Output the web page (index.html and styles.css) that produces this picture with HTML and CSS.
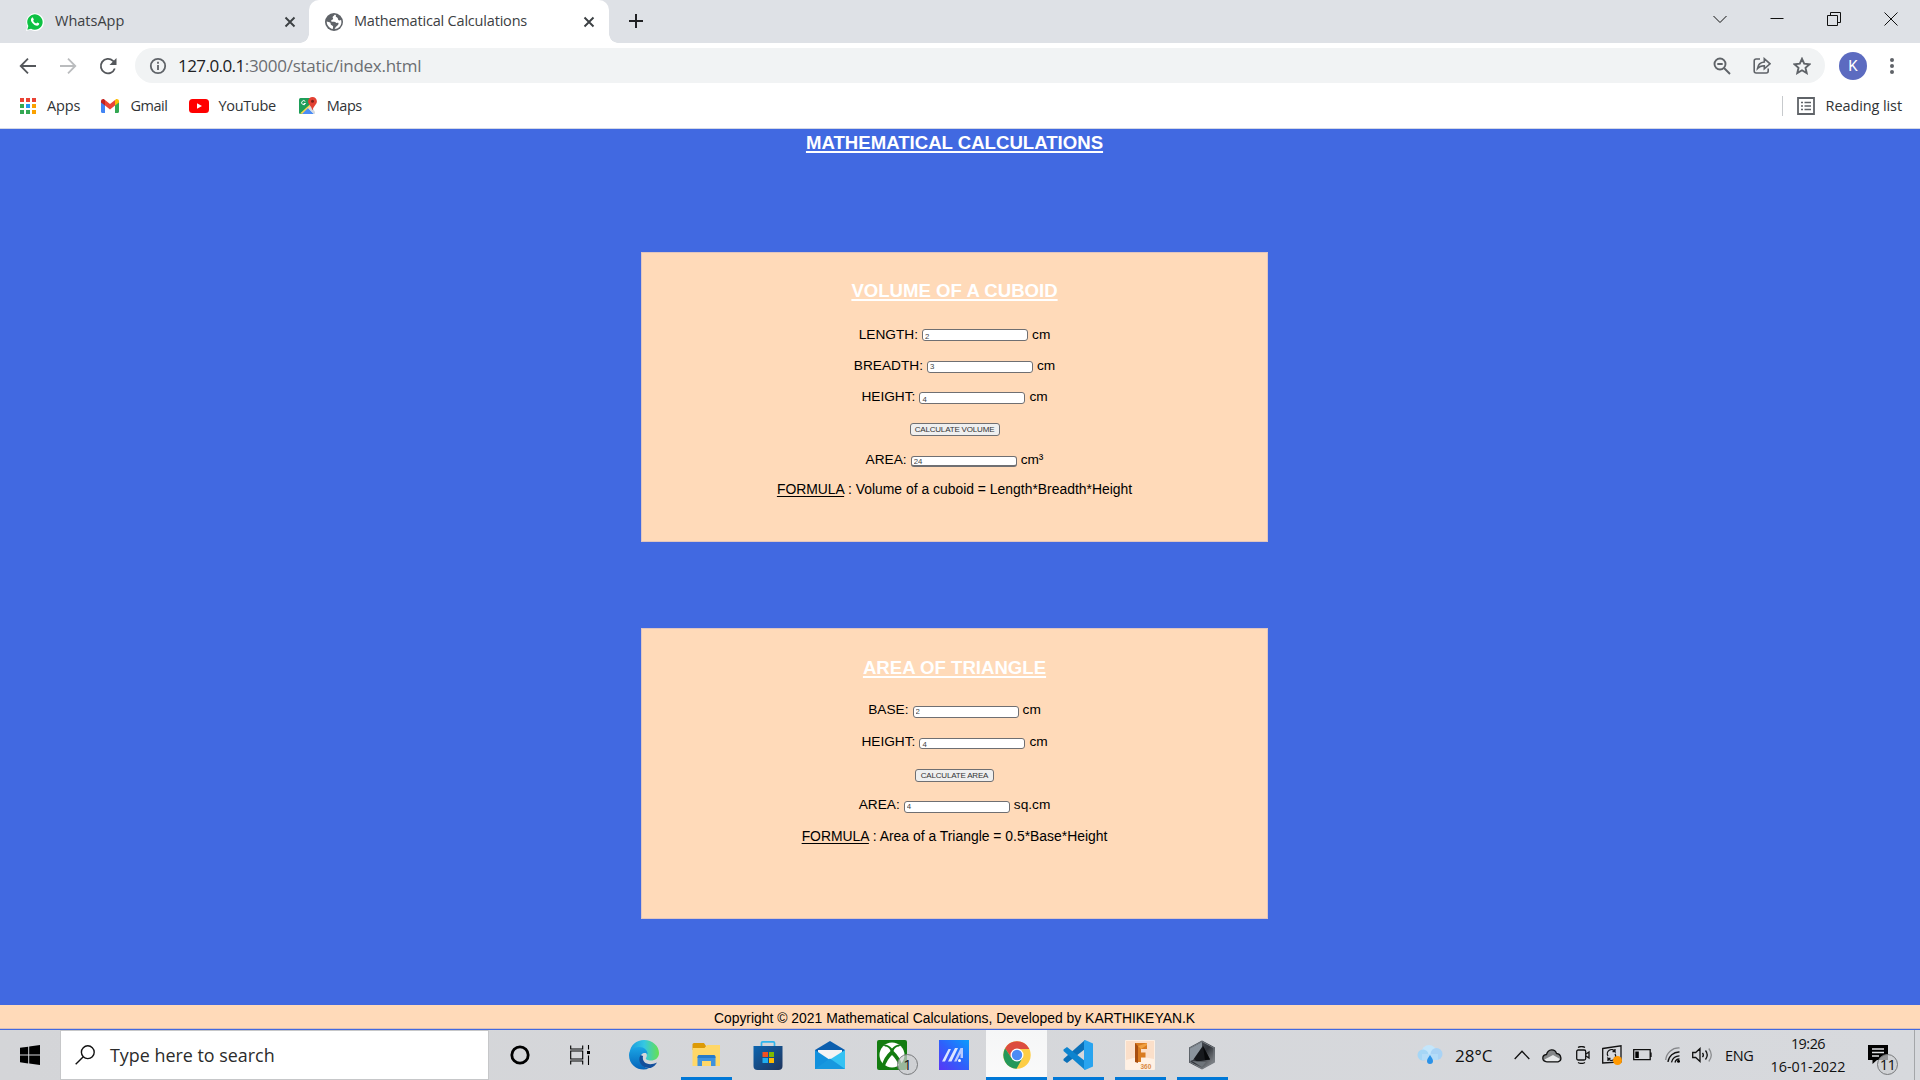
FILE: index.html
```html
<!DOCTYPE html>
<html lang="en">
<head>
<meta charset="utf-8">
<title>Mathematical Calculations</title>
<link rel="stylesheet" href="styles.css">
</head>
<body>
<div class="screen">

  <header class="tabstrip">
    <div class="tab">
      <svg class="favicon" viewBox="0 0 18 18"><path d="M0 18l1.3-4.6A8.9 8.9 0 1 1 4.6 16.8z" fill="#fff"/><path d="M1.3 16.7l1-3.700A7.7 7.7 0 1 1 5 15.700z" fill="#0dc143"/><path d="M5.9 4.800c.4-.4 1-.3 1.200.1l.7 1.500c.1.400-.6 1-.6 1.300.6 1.300 1.600 2.200 2.900 2.700.4.100.9-1 1.300-.9l1.600.8c.4.200.2 1.300-.3 1.800-1 .9-2.500.7-4.200-.2a8.500 8.500 0 0 1-3.300-3.700c-.5-1.400-.2-2.600.7-3.400z" fill="#fff"/></svg>
      <span class="tab-title">WhatsApp</span>
      <svg class="tab-close" viewBox="0 0 12 12"><path d="M1.500 1.500l9 9M10.500 1.500l-9 9"/></svg>
    </div>
    <div class="tab tab-active">
      <svg class="favicon" viewBox="0 0 18 18"><circle cx="9" cy="9" r="9" fill="#5f6368"/><path d="M9.500 1.700c-.3 1-1.700 1.300-1.900 2.300-.1 1 .7 1.100.5 2-.3 1-2 .7-2 1.900 0 1 1.600.7 3 .8 1.300.2 1.700 1 2.600 1.200.8.100 1.200-.4 1.700.1.600.8-.7 2.500-1.800 3.300-.9.700-1.500 1.500-2 2.800 3.700-.3 6.800-3.200 6.800-7.100 0-.7-.2-1.700-.4-2.200-.8.800-2 .9-2.600.2-.6-.8-.2-1.500-1-2.300-.7-.5-1.700-.8-1.700-1.700 0-.5.200-.8.500-1zM1.700 8.500c0 3.700 2.600 6.800 6.100 7.500.1-1.300.5-2 .2-2.700-.5-.9-1.800-.8-2.200-1.700-.3-.8.100-1.400-.7-2.100-.8-.6-2.200-.3-3.400-1z" fill="#fff"/></svg>
      <span class="tab-title tight">Mathematical Calculations</span>
      <svg class="tab-close" viewBox="0 0 12 12"><path d="M1.500 1.500l9 9M10.500 1.500l-9 9"/></svg>
    </div>
    <svg class="new-tab" viewBox="0 0 16 16"><path d="M8 1v14M1 8h14"/></svg>
    <div class="window-controls">
      <svg viewBox="0 0 14 14"><path d="M.5 4l6.500 6.500L13.500 4"/></svg>
      <svg viewBox="0 0 14 14"><path d="M.5 6.500h13"/></svg>
      <svg viewBox="0 0 14 14"><path d="M.5 3.500h10v10h-10zM3.500 3.500v-3h10v10h-3"/></svg>
      <svg viewBox="0 0 14 14"><path d="M.5.500l13 13M13.500.500l-13 13"/></svg>
    </div>
  </header>

  <nav class="toolbar">
    <svg class="nav-icon" viewBox="0 0 18 18"><path d="M17 9H2M9 1.700L1.700 9 9 16.300"/></svg>
    <svg class="nav-icon disabled" viewBox="0 0 18 18"><path d="M1 9h15M9 1.700L16.300 9 9 16.300"/></svg>
    <svg class="nav-icon" viewBox="0 0 18 18"><path d="M15.800 11.500A7.200 7.200 0 1 1 14 3.900l2 2"/><path d="M17.500 1v7h-7z" class="solid"/></svg>
    <div class="omnibox">
      <svg class="info" viewBox="0 0 18 18"><circle cx="9" cy="9" r="7.200"/><path d="M9 8v5M9 4.700v2"/></svg>
      <span class="host">127.0.0.1</span><span class="path">:3000/static/index.html</span>
      <div class="omni-actions">
        <svg viewBox="0 0 18 18"><circle cx="7" cy="7" r="5.500"/><path d="M4.300 7h5.400M11 11l6 6"/></svg>
        <svg viewBox="0 0 18 18"><path d="M7 2H3.200C2 2 1.200 2.800 1.200 4v10c0 1.300.8 2 2 2h10c1.300 0 2-.7 2-2v-2.500M4.500 11.500C5 7.500 7.500 5.300 11.300 5V1.700L17 6.800l-5.700 5V8.700c-3-.1-5.100.8-6.800 2.800z" class="thin"/></svg>
        <svg viewBox="0 0 18 18"><path d="M9 1.800l2.200 4.900 5.400.5-4.100 3.600 1.200 5.300L9 13.300l-4.700 2.800 1.200-5.300-4.100-3.600 5.400-.5z"/></svg>
      </div>
    </div>
    <div class="avatar">K</div>
    <svg class="kebab" viewBox="0 0 4 16"><circle cx="2" cy="2" r="2"/><circle cx="2" cy="8" r="2"/><circle cx="2" cy="14" r="2"/></svg>
  </nav>

  <nav class="bookmarks">
    <a class="bookmark bm-apps">
      <svg viewBox="0 0 18 18"><path d="M1 1h4v4H1zM7 1h4v4H7zM13 1h4v4h-4z" fill="#ea4335"/><path d="M1 7h4v4H1zM1 13h4v4H1zM7 13h4v4H7z" fill="#34a853"/><path d="M7 7h4v4H7z" fill="#2196f3"/><path d="M13 7h4v4h-4zM13 13h4v4h-4z" fill="#fba100"/></svg>
      <span>Apps</span></a>
    <a class="bookmark bm-gmail">
      <svg viewBox="0 0 18 18"><path d="M0 4l4 3v9H1.200C.5 16 0 15.500 0 14.800z" fill="#4285f4"/><path d="M14 7l4-3v10.800c0 .7-.5 1.200-1.200 1.200H14z" fill="#34a853"/><path d="M4 3l5 4 5-4v5.500l-5 4-5-4z" fill="#ea4335"/><path d="M0 4.300C0 2.500 2 1.500 3.400 2.500L4 3v5.500L0 5.600z" fill="#c5221f"/><path d="M18 4.300c0-1.800-2-2.800-3.400-1.800L14 3v5.500l4-2.900z" fill="#fbbc04"/></svg>
      <span>Gmail</span></a>
    <a class="bookmark bm-youtube">
      <svg viewBox="0 0 20 18"><rect y="2" width="20" height="14" rx="3.500" fill="#f00"/><path d="M8 6.200v5.600L13 9z" fill="#fff"/></svg>
      <span>YouTube</span></a>
    <a class="bookmark bm-maps">
      <svg viewBox="0 0 18 18"><path d="M0 2.500Q0 1 1.500 1H12v7L3 17H1.500Q0 17 0 15.500z" fill="#1e9e59"/><path d="M1 16.500L12.500 6l2 3L5 17z" fill="#ffd84a"/><path d="M3 17l6-6 6 6z" fill="#4c8df6"/><path d="M9 11l3-2.500 4 6.500v1.500L15 17z" fill="#d5d9de"/><path d="M6.300 4.500a2 2 0 1 0 .2 2H4.700" fill="none" stroke="#fff"/><path d="M13.500 0a4.400 4.400 0 0 1 4.400 4.400c0 3-3.300 4-4.200 8.600h-.4C12.400 8.400 9.100 7.400 9.100 4.400A4.400 4.400 0 0 1 13.500 0z" fill="#e34133"/><circle cx="13.500" cy="4.300" r="1.500" fill="#7b1f18"/></svg>
      <span>Maps</span></a>
    <div class="reading-list">
      <svg viewBox="0 0 18 18"><path d="M1 1h16v16H1z"/><path d="M4 5.500h2M7.500 5.500h6.500M4 9h2M7.500 9h6.500M4 12.500h2M7.500 12.500h6.500" class="thin"/></svg>
      <span>Reading list</span>
    </div>
  </nav>

  <main class="page">
    <h1 class="page-title">MATHEMATICAL CALCULATIONS</h1>

    <section class="card card-volume">
      <h2>VOLUME OF A CUBOID</h2>
      <div class="row"><label for="length">LENGTH:</label><input id="length" class="drop-1" value="2"><span>cm</span></div>
      <div class="row"><label for="breadth">BREADTH:</label><input id="breadth" class="drop-2 raised" value="3"><span>cm</span></div>
      <div class="row"><label for="height">HEIGHT:</label><input id="height" class="drop-2" value="4"><span>cm</span></div>
      <div class="row button-row"><button class="wide" type="button">CALCULATE VOLUME</button></div>
      <div class="row"><label for="volume">AREA:</label><input id="volume" class="drop-3 heavy" value="24"><span>cm³</span></div>
      <p class="formula"><u>FORMULA</u> : Volume of a cuboid = Length*Breadth*Height</p>
    </section>

    <section class="card card-area">
      <h2>AREA OF TRIANGLE</h2>
      <div class="row"><label for="base">BASE:</label><input id="base" class="drop-3 raised" value="2"><span>cm</span></div>
      <div class="row"><label for="tri-height">HEIGHT:</label><input id="tri-height" class="drop-3 short" value="4"><span>cm</span></div>
      <div class="row button-row"><button type="button">CALCULATE AREA</button></div>
      <div class="row"><label for="area">AREA:</label><input id="area" class="drop-3 raised" value="4"><span>sq.cm</span></div>
      <p class="formula"><u>FORMULA</u> : Area of a Triangle = 0.5*Base*Height</p>
    </section>

    <footer class="copyright">Copyright © 2021 Mathematical Calculations, Developed by KARTHIKEYAN.K</footer>
  </main>

  <div class="taskbar">
    <div class="start"><svg viewBox="0 0 20 20"><path d="M0 2.800L8.200 1.700v7.800H0zM9.200 1.500L20 0v9.500H9.200zM0 10.500h8.200v7.900L0 17.200zM9.200 10.500H20V20L9.200 18.500z"/></svg></div>
    <div class="search">
      <svg viewBox="0 0 20 20"><circle cx="12.800" cy="7.200" r="6.400"/><path d="M8.300 11.700L.7 19.300"/></svg>
      <span>Type here to search</span>
    </div>
    <div class="apps">
      <div class="app"><svg class="glyph" viewBox="0 0 20 20"><circle cx="10" cy="10" r="8.200" fill="none" stroke="#000" stroke-width="2.800"/></svg></div>
      <div class="app task-view"><svg class="glyph" viewBox="0 0 20 20" fill="none" stroke="#000" stroke-width="1.100"><path d="M.7.500v3.500h12V.5M.7 6h12v8h-12zM.7 19.500V16h12v3.500M18.500 0v4.500M18.500 10.500V20"/><path d="M17 6h3v3h-3z" fill="#000" stroke="none"/></svg></div>
      <div class="app"><svg viewBox="0 0 30 30">
        <defs><linearGradient id="edgeTop" x1="0" x2="1"><stop stop-color="#199ade"/><stop offset=".5" stop-color="#35c7e3"/><stop offset="1" stop-color="#67e14f"/></linearGradient><linearGradient id="edgeSide" x1="0" y1="0" x2="0" y2="1"><stop stop-color="#1ba5e5"/><stop offset="1" stop-color="#0463b9"/></linearGradient></defs>
        <path d="M.5 13C1.500 5 7.500 0 15 0c8.500 0 15 6 15 13 0 5-4 7.500-8 7.500-3.500 0-5.800-1.200-5-2.500 2-2.500.5-7-4.500-8C7 9 2.500 10 .5 13z" fill="url(#edgeTop)"/>
        <path d="M0 15c0-5 5-8 10-8 6 0 9 4 8.500 7.500-2-3-7.500-1-7.500 4 0 6 5 9.500 9 10-8 3.500-20-1.500-20-13.500z" fill="url(#edgeSide)"/>
        <path d="M11.500 15c-4 7 2.500 14 10 13 3-1 5.500-3.500 6.500-5.500-8 4-15.500.5-14-6.500z" fill="#124f9c"/></svg></div>
      <div class="app running"><svg viewBox="0 0 30 30"><path d="M1.500 4.500Q1.500 3 3 3h10l2 3v4H1.500z" fill="#dd9a05"/><path d="M1.500 8h12l2.500-3H29v21H1.500z" fill="#ffd768"/><path d="M6.500 26V17q0-2 2-2h14q2 0 2 2v9h-4.500v-5h-9v5z" fill="#3f92de"/><path d="M6.500 18q0-3 2-3h14q2 0 2 3z" fill="#287bc9"/></svg></div>
      <div class="app"><svg viewBox="0 0 30 30"><defs><linearGradient id="store" x1="0" y1="0" x2="1" y2="1"><stop stop-color="#0c65b1"/><stop offset="1" stop-color="#20345b"/></linearGradient></defs><path d="M8.500 7V3q0-1.200 1.200-1.200h10.600q1.200 0 1.200 1.200v4" fill="none" stroke="#2fb5ed" stroke-width="1.700"/><path d="M.5 6h29v20q0 4-4 4h-21q-4 0-4-4z" fill="url(#store)"/><path d="M9.500 12H15v5H9.500z" fill="#f25022"/><path d="M16 12h5v5h-5z" fill="#7fba00"/><path d="M9.500 18H15v5H9.500z" fill="#1eaeef"/><path d="M16 18h5v5h-5z" fill="#ffb900"/></svg></div>
      <div class="app"><svg viewBox="0 0 30 30"><path d="M0 10L15 1l15 9v5H0z" fill="#0b5eae"/><path d="M3 10h24v12H3z" fill="#f4f4f4"/><path d="M0 10l15 10-4 9H0z" fill="#1291dd"/><path d="M30 10v19H15l-4-7z" fill="#34c2f3"/><path d="M0 29L15 18.500 30 29z" fill="#1798df"/></svg></div>
      <div class="app"><svg viewBox="0 0 30 30"><rect width="30" height="30" rx="2" fill="#137c10"/><circle cx="15" cy="15" r="12.500" fill="#fff"/><path d="M6 4.500q5-.5 9 4 4-4.500 9-4l-2 2q-4 0-5.500 4.500 6.500 6 8.500 14l-2.500 2.500Q20 19.500 15 15q-5 4.500-7.500 12.500L5 25q2-8 8.500-14Q12 6.500 8 6.500z" fill="#137c10"/></svg><span class="badge">1</span></div>
      <div class="app"><svg viewBox="0 0 30 30"><defs><linearGradient id="armoury" x1="0" y1="1" x2="1" y2="0"><stop stop-color="#5a36f5"/><stop offset=".5" stop-color="#2e61fb"/><stop offset="1" stop-color="#0a9dfd"/></linearGradient></defs><path d="M0 0h30v30H0z" fill="url(#armoury)"/><path d="M3 21.500L9.500 9H12L6 21.500zM9 21.500L16 8h3l-6.500 13.500z" fill="#dce5ff"/><path d="M15 21.500L21.500 8H24v10h-2.500v-4.500l-4 8z" fill="#b9caff"/><circle cx="20.500" cy="20.500" r="1.500" fill="#fff"/></svg></div>
      <div class="app running current"><svg viewBox="0 0 30 30"><circle cx="15" cy="15" r="13.700" fill="#fdcd45"/><path d="M3.100 8.200A13.700 13.700 0 0 1 26.900 8.200L27.300 9H15L9.500 18z" fill="#dc4c3f"/><path d="M3.100 8.200A13.700 13.700 0 0 0 14.500 28.700L20.500 18l-11 0z" fill="#24985a"/><circle cx="15" cy="15" r="6.500" fill="#fff"/><circle cx="15" cy="15" r="5.200" fill="#4c8bf5"/></svg></div>
      <div class="app running"><svg viewBox="0 0 30 30"><path d="M22 0v9L4 23 .5 20.500V19z" fill="#0b70b8"/><path d="M.5 9.500L4 7l18 14v9L.5 11z" fill="#0d84cf"/><path d="M22 0l8 3.500v23L22 30q-1-.5-1-2V2q0-1.500 1-2z" fill="#29a4ef"/></svg></div>
      <div class="app running"><svg viewBox="0 0 30 30"><path d="M.5.500h29v29H.5z" fill="#fbdfc9" stroke="#fdf0e4"/><path d="M1 20Q14 15 29 19v10H1z" fill="#fff1e4"/><path d="M10 3h12v6h-6v3.500h4.500v5H16V22h-6z" fill="#d97c21"/><path d="M10 3l3 3v17l-3-1z" fill="#a84f10"/><path d="M13 6l9-3v2l-6 4z" fill="#f0a040"/><text x="15.500" y="28.500" class="icon-text">360</text></svg></div>
      <div class="app running"><svg viewBox="0 0 30 30"><defs><linearGradient id="hex" x1="0" y1="0" x2="1" y2="1"><stop stop-color="#59616a"/><stop offset=".5" stop-color="#30343a"/><stop offset="1" stop-color="#a5a8ac"/></linearGradient></defs><path d="M15 .5l13 7v15L15 29.500l-13-7v-15z" fill="url(#hex)"/><path d="M15 1.500l12 6.500v14L15 28.500 3 22V8z" fill="none" stroke="#777c82"/><path d="M3 8.500L15 2v5L6 20l-3 1z" fill="#8b949d"/><path d="M16 6L7 19l3 2.500 13-2z" fill="#17191d"/><path d="M16 6l7 13.500-5 .5z" fill="#07080a"/><path d="M5 21l14 1-4 5z" fill="#6f757b"/></svg></div>
    </div>
    <div class="tray">
      <svg class="t-weather" viewBox="0 0 26 20"><circle cx="12" cy="7.500" r="7.500" fill="#c4e6fb"/><circle cx="6" cy="10" r="5.500" fill="#a5d6f6"/><circle cx="19.500" cy="9" r="6" fill="#a9d3f5"/><path d="M5 9h16v6H5z" fill="#b4dcf8"/><path d="M13 10c2 3 3 4.300 3 6a3 3 0 0 1-6 0c0-1.700 1-3 3-6z" fill="#2b92e8"/></svg>
      <span class="temp">28°C</span>
      <svg class="t-up" viewBox="0 0 16 10"><path d="M.7 9L8 1.200 15.300 9"/></svg>
      <svg class="t-cloud" viewBox="0 0 20 15"><path d="M5 13.800C-.5 13.500-.5 7 4.500 6.500 6 .5 13 .5 14.500 5.500c5 .5 6 7.500 1.500 8.300z" fill="#858789" stroke="none"/><path d="M2.500 11.500L11 7l7 4-2 2.800H5z" fill="#e7e8e9" stroke="none"/><path d="M5 13.800C-.5 13.500-.5 7 4.500 6.500 6 .5 13 .5 14.500 5.500c5 .5 6 7.500 1.500 8.300z"/></svg>
      <svg class="t-meet" viewBox="0 0 14 18"><rect x=".700" y="4" width="9" height="10" rx="1.500"/><path d="M10 8l3-2v6l-3-2M2 1.500Q5.500-.5 9 1.500M2 16.500Q5.500 18.500 9 16.500"/></svg>
      <svg class="t-update" viewBox="0 0 20 20"><path d="M.7 3.500L19 .8V17L.7 18zM6 11a4 4 0 0 1 7-4.500V4M13 6.500h-2.500M13 9a4 4 0 0 1-7 4.500V16M6 13.500h2.500"/><circle cx="15.500" cy="15.500" r="4.500" fill="#ff9800" stroke="none"/></svg>
      <svg class="t-battery" viewBox="0 0 19 12"><path d="M.7.700h16.500v10H.7zM18 3.500v4.500"/><path d="M2.300 2.500h3.500v6.500H2.300z" fill="#000" stroke="none"/></svg>
      <svg class="t-wifi" viewBox="0 0 16 16"><path d="M.7 13A13 13 0 0 1 14.500 1" stroke="#85878a"/><path d="M3 15A11 11 0 0 1 14.500 5M6.500 15.300A8 8 0 0 1 14.500 8.800M10 15.500A4.500 4.500 0 0 1 14.500 12"/><circle cx="13.500" cy="14.300" r="1.500" fill="#000" stroke="none"/></svg>
      <svg class="t-volume" viewBox="0 0 21 16"><path d="M.7 5.500h3L8 1.500v13l-4.300-4h-3zM10.500 5.800q1.700 2.200 0 4.400M13.500 3.500q3.500 4.500 0 9"/><path d="M16.800 1.500q5 6.500 0 13" stroke="#8b8d90"/></svg>
      <span class="lang">ENG</span>
      <div class="clock"><span class="time">19:26</span><span>16-01-2022</span></div>
      <div class="notice"><svg viewBox="0 0 20 20"><path d="M0 0h20v15H9l-4.500 4v-4H0z"/><path d="M4 4h12M4 7.500h12M4 11h7" stroke="#dfe1e4" stroke-width="1.300"/></svg><span class="badge">11</span></div>
    </div>
  </div>
</div>
</body>
</html>
```
FILE: styles.css
```css
* { box-sizing: border-box; }

body {
  margin: 0;
  font-family: "Open Sans", "Noto Sans", sans-serif;
}

svg { display: block; flex: none; }

.screen {
  width: 1920px;
  height: 1080px;
  display: flex;
  flex-direction: column;
  overflow: hidden;
}

/* Tab strip */
.tabstrip {
  height: 43px;
  display: flex;
  background: #dee1e6;
  font-size: 14.5px;
  color: #3c4043;
}

.tab {
  width: 309px;
  display: flex;
  align-items: center;
  padding: 0 13px 0 26px;
}

.tab-active {
  width: 300px;
  padding: 0 14px 0 16px;
  background: #fff;
  border-radius: 10px 10px 0 0;
  position: relative;
}

.tab-active::before,
.tab-active::after {
  content: "";
  position: absolute;
  bottom: 0;
  width: 9px;
  height: 9px;
}
.tab-active::before { left: -9px; background: radial-gradient(circle at 0 0, transparent 8.5px, #fff 9px); }
.tab-active::after { right: -9px; background: radial-gradient(circle at 100% 0, transparent 8.5px, #fff 9px); }

.favicon { width: 18px; height: 18px; }
.tab-title { margin: -3px auto 0 11px; white-space: nowrap; }
.tab .tight { letter-spacing: -.19px; }
.tab-close { width: 12px; height: 12px; fill: none; stroke: #3c4043; stroke-width: 1.9; }
.new-tab { width: 16px; height: 16px; margin: 13px 0 0 19px; stroke: #202124; stroke-width: 2; }

.window-controls {
  margin-left: auto;
  padding: 12px 22px 0 0;
  display: flex;
  gap: 43px;
}
.window-controls svg { width: 14px; height: 14px; fill: none; stroke: #111; stroke-width: 1; }

/* Address bar */
.toolbar {
  height: 45px;
  display: flex;
  align-items: center;
  padding-left: 19px;
  background: #fff;
}
.nav-icon { width: 18px; height: 18px; margin-right: 22px; fill: none; stroke: #54575b; stroke-width: 1.8; }
.nav-icon .solid { fill: #54575b; stroke: none; }
.disabled { stroke: #babcbe; }

.omnibox {
  width: 1690px;
  height: 35px;
  margin-left: -4px;
  display: flex;
  align-items: center;
  padding: 0 14px;
  border-radius: 18px;
  background: #f1f3f4;
  font-size: 17px;
  white-space: nowrap;
}
.info { width: 18px; height: 18px; margin-right: 11px; fill: none; stroke: #5f6368; stroke-width: 1.8; }
.host { color: #202124; letter-spacing: -.56px; }
.path { color: #6b6e72; letter-spacing: -.26px; }
.omni-actions { margin-left: auto; display: flex; gap: 22px; }
.omni-actions svg { width: 18px; height: 18px; fill: none; stroke: #5f6368; stroke-width: 1.9; }
.omni-actions .thin { stroke-width: 1.6; }

.avatar {
  width: 28px;
  height: 28px;
  margin: 0 23px 0 14px;
  border-radius: 50%;
  background: #5c6bc0;
  color: #fff;
  font: 15px/28px Roboto, sans-serif;
  text-align: center;
}
.kebab { width: 4px; height: 16px; fill: #5f6368; }

/* Bookmarks */
.bookmarks {
  height: 41px;
  display: flex;
  align-items: center;
  padding: 0 18px 5px 19px;
  background: #fff;
  border-bottom: 1px solid #d3d8e6;
  font-size: 14.5px;
  color: #303336;
  white-space: nowrap;
}
.bookmark { display: flex; align-items: center; }
.bookmark svg { height: 18px; }
.bm-apps { gap: 10px; letter-spacing: -.1px; }
.bm-gmail { gap: 11px; margin-left: 21px; letter-spacing: -.45px; }
.bm-youtube { gap: 10px; margin-left: 21px; letter-spacing: -.35px; }
.bm-maps { gap: 10px; margin-left: 23px; letter-spacing: -.45px; }
.bm-apps svg, .bm-gmail svg, .bm-maps svg { width: 18px; }
.bm-youtube svg { width: 20px; }
.reading-list {
  height: 20px;
  margin-left: auto;
  display: flex;
  align-items: center;
  gap: 11px;
  padding-left: 14px;
  border-left: 1px solid #c7cacd;
  letter-spacing: -.1px;
}
.reading-list svg { width: 18px; height: 18px; fill: none; stroke: #5f6368; stroke-width: 1.8; }
.reading-list .thin { stroke-width: 1.6; }

/* Page */
.page {
  height: 901px;
  display: flex;
  flex-direction: column;
  align-items: center;
  background: #4169e1;
  color: #000;
  font-family: "Liberation Sans", Arial, sans-serif;
  font-size: 13.7px;
  line-height: 20px;
}

.page-title, .card h2 {
  margin: 0;
  font-size: 18.6px;
  line-height: 22px;
  color: #fff;
  text-decoration: underline;
  text-decoration-thickness: 1.5px;
  text-underline-offset: 2px;
}
.page-title { margin: 3px 11px 0 0; }

.card {
  width: 627px;
  margin-right: 11px;
  display: flex;
  flex-direction: column;
  align-items: center;
  border: 1px solid #e0c5bf;
  background: #ffdab9;
}
.card-volume { height: 290px; margin-top: 98px; padding-top: 27px; gap: 11px; }
.card-area { height: 291px; margin-top: 86px; padding-top: 28px; gap: 12px; }
.card-volume h2 { margin-bottom: 11px; }
.card-area h2 { margin-bottom: 8px; }

.row { height: 20px; display: flex; align-items: flex-start; gap: 4px; }
.row label, .row span { margin-top: 1px; }

.row input {
  width: 106px;
  height: 12px;
  padding: 2px 1px 0 2px;
  border: 1px solid #6f6f72;
  border-radius: 3px;
  background: #fff;
  color: #444;
  font: 7.8px/8px "Liberation Sans", Arial, sans-serif;
}
.row .raised { padding: 0 1px 1px 2px; }
.row .short { height: 11px; padding-top: 1px; }
.row .heavy { height: 11px; padding: 0 1px 0 2px; border-bottom-width: 2px; }
.drop-1 { margin-top: 5px; }
.drop-2 { margin-top: 6px; }
.drop-3 { margin-top: 7px; }

.row button {
  width: 79px;
  height: 13px;
  padding: 0;
  border: 1px solid #6f6f72;
  border-radius: 3px;
  background: #efefef;
  color: #333;
  font: 8px/10px "Liberation Sans", Arial, sans-serif;
  letter-spacing: -.18px;
  white-space: nowrap;
}
.row .wide { width: 90px; }
.button-row { padding-top: 6px; }
.card-volume .button-row { height: 21px; }
.card-area .button-row { height: 19px; }

.formula { margin: 0; font-size: 13.92px; }
.card-volume .formula { margin-top: -1px; }
.formula u { text-decoration-thickness: 1.3px; text-underline-offset: 2px; }

.copyright {
  width: 1920px;
  height: 24px;
  margin-top: auto;
  margin-bottom: 1px;
  padding-right: 11px;
  background: #ffdab9;
  border-bottom: 1px solid #d8bfb9;
  font-size: 13.92px;
  line-height: 26px;
  text-align: center;
}

/* Taskbar */
.taskbar {
  height: 50px;
  display: flex;
  background: linear-gradient(90deg, #d4d5d8, #d7d9dd);
  color: #111;
}
.start { width: 60px; padding: 15px 0 0 20px; }
.start svg { width: 20px; height: 20px; }
.search {
  width: 429px;
  display: flex;
  align-items: center;
  gap: 15px;
  padding-left: 14px;
  border: 1px solid #c6c7c9;
  background: #fff;
  color: #2b2b2b;
  font-size: 17.9px;
}
.search svg { width: 20px; height: 20px; fill: none; stroke: #111; stroke-width: 1.4; }

.apps { display: flex; }
.app {
  width: 62px;
  display: flex;
  align-items: center;
  justify-content: center;
  position: relative;
}
.app svg { width: 30px; height: 30px; }
.app .glyph { width: 20px; height: 20px; }
.task-view { padding-right: 5px; }
.running::after {
  content: "";
  position: absolute;
  left: 6px;
  right: 5px;
  bottom: 0;
  height: 3px;
  background: #0078d7;
}
.current { background: linear-gradient(#f5f6f7, #fafafa); background-clip: content-box; padding-left: 1px; }
.current::after { left: 1px; right: 0; }
.icon-text { font: bold 6.5px "Liberation Sans", Arial, sans-serif; fill: #d98a43; }

.badge {
  position: absolute;
  width: 21px;
  height: 21px;
  border: 1px solid #77797b;
  border-radius: 50%;
  background: rgba(205, 207, 209, .72);
  font-size: 15px;
  line-height: 19px;
  text-align: center;
}
.app .badge { left: 36px; top: 24px; }

.tray {
  flex: 1;
  display: flex;
  align-items: center;
  margin-right: 5px;
  padding-left: 184px;
  border-right: 1px solid #a4a6a9;
  white-space: nowrap;
}
.tray > * { flex: none; }
.tray > svg { fill: none; stroke: #111; stroke-width: 1.3; }
.tray .t-weather { width: 26px; height: 20px; stroke: none; }
.temp { width: 71px; padding-left: 12px; font-size: 17px; }
.t-up { width: 16px; height: 10px; }
.t-cloud { width: 20px; height: 15px; margin-left: 12px; }
.t-meet { width: 14px; height: 18px; margin-left: 14px; }
.t-update { width: 20px; height: 20px; margin-left: 12px; }
.t-battery { width: 19px; height: 12px; margin-left: 11px; }
.t-wifi { width: 16px; height: 16px; margin-left: 13px; }
.t-volume { width: 21px; height: 16px; margin-left: 11px; }
.lang { width: 30px; margin-left: 12px; font-size: 14.5px; letter-spacing: -.4px; }
.clock {
  width: 76px;
  margin-left: 15px;
  display: flex;
  flex-direction: column;
  align-items: center;
  font-size: 14.4px;
  line-height: 23px;
}
.time { letter-spacing: -.5px; }
.notice { width: 20px; height: 20px; margin-left: 22px; position: relative; }
.notice svg { width: 20px; height: 20px; }
.notice .badge { left: 9px; top: 9px; letter-spacing: -.8px; }
```
